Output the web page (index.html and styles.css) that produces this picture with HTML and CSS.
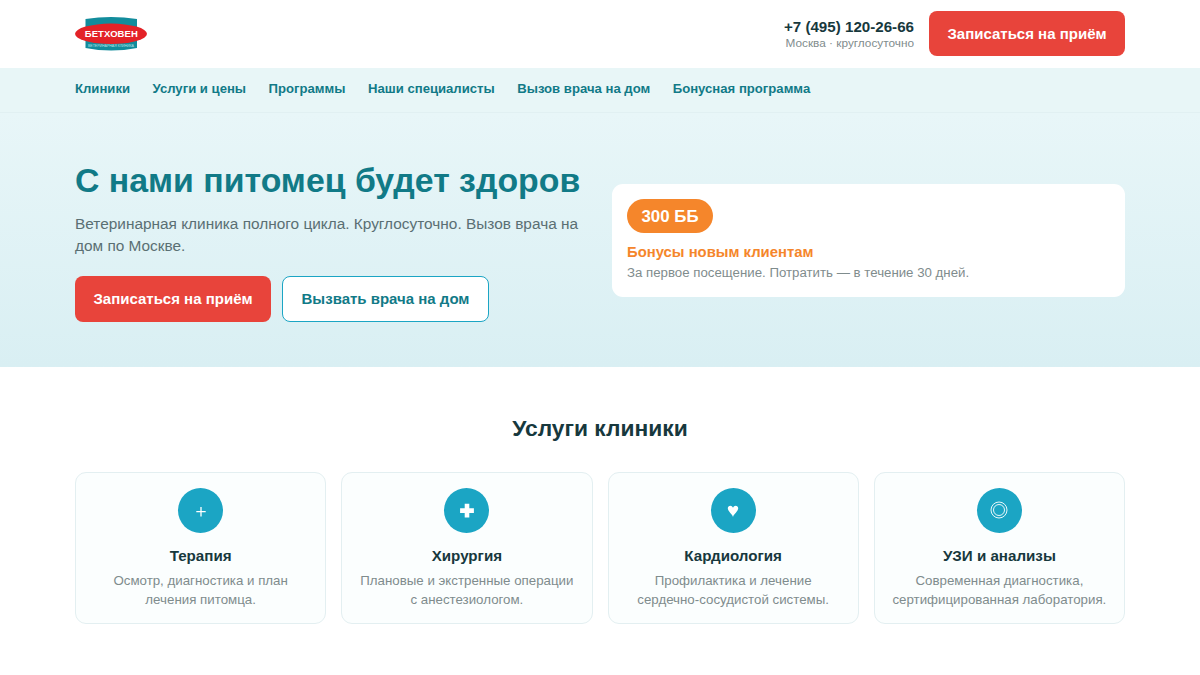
FILE: index.html
```html
<!DOCTYPE html>
<html lang="ru">
<head>
  <meta charset="UTF-8">
  <meta name="viewport" content="width=device-width, initial-scale=1.0">
  <title>Бетховен</title>
  <link rel="stylesheet" href="styles.css">
</head>
<body>
  <header class="header">
    <div class="container header-inner">
      <a href="#" class="logo">
        <svg width="72" height="36" viewBox="0 0 72 36">
          <path d="M10.5 3 Q36 -1 62 3 V32 Q36 37 10.5 32 Z" fill="#128c9c"/>
          <ellipse cx="36" cy="17.8" rx="36" ry="10.2" fill="#e32227"/>
          <text class="logo-name" x="36.3" y="21.2" text-anchor="middle" textLength="53">БЕТХОВЕН</text>
          <text class="logo-sub" x="36" y="30.8" text-anchor="middle" textLength="46">ВЕТЕРИНАРНАЯ КЛИНИКА</text>
        </svg>
      </a>
      <div class="header-right">
        <div class="phone">
          <a href="#" class="phone-number">+7 (495) 120-26-66</a>
          <span class="phone-note">Москва · круглосуточно</span>
        </div>
        <a href="#" class="btn btn-red">Записаться на приём</a>
      </div>
    </div>
  </header>

  <nav class="nav">
    <div class="container nav-inner">
      <a href="#">Клиники</a>
      <a href="#">Услуги и цены</a>
      <a href="#">Программы</a>
      <a href="#">Наши специалисты</a>
      <a href="#">Вызов врача на дом</a>
      <a href="#">Бонусная программа</a>
    </div>
  </nav>

  <section class="hero">
    <div class="container hero-inner">
      <div class="hero-text">
        <h1>С нами питомец будет здоров</h1>
        <p>Ветеринарная клиника полного цикла. Круглосуточно. Вызов врача на дом по Москве.</p>
        <div class="hero-buttons">
          <a href="#" class="btn btn-red">Записаться на приём</a>
          <a href="#" class="btn btn-outline">Вызвать врача на дом</a>
        </div>
      </div>
      <div class="bonus">
        <span class="bonus-badge">300 ББ</span>
        <h3>Бонусы новым клиентам</h3>
        <p>За первое посещение. Потратить — в течение 30 дней.</p>
      </div>
    </div>
  </section>

  <section class="services">
    <div class="container">
      <h2>Услуги клиники</h2>
      <div class="cards">
        <div class="card">
          <div class="card-icon">
            <svg width="18" height="18" viewBox="0 0 18 18"><path d="M9 6v9.4M4.3 10.7h9.4" stroke="#fff" stroke-width="1.3"/></svg>
          </div>
          <h3>Терапия</h3>
          <p>Осмотр, диагностика и план лечения питомца.</p>
        </div>
        <div class="card">
          <div class="card-icon">
            <svg width="18" height="18" viewBox="0 0 18 18"><path d="M6.7 2.7h4.6v4.6h4.6v4.6h-4.6v4.6H6.7v-4.6H2.1V7.3h4.6z" fill="#fff"/></svg>
          </div>
          <h3>Хирургия</h3>
          <p>Плановые и экстренные операции с&nbsp;анестезиологом.</p>
        </div>
        <div class="card">
          <div class="card-icon">
            <svg width="18" height="18" viewBox="0 0 18 18"><path d="M9 16C8.2 13.1 3.8 10.300 3.8 7.3c0-3.2 4.2-3.7 5.2-.5 1-3.2 5.2-2.7 5.2.5 0 3-4.4 5.8-5.2 8.7z" fill="#fff"/></svg>
          </div>
          <h3>Кардиология</h3>
          <p>Профилактика и лечение <span class="nowrap">сердечно-сосудистой</span> системы.</p>
        </div>
        <div class="card">
          <div class="card-icon">
            <svg width="18" height="18" viewBox="0 0 18 18" fill="none" stroke="#fff" stroke-width="0.9"><circle cx="9" cy="9" r="8"/><circle cx="9" cy="9" r="5.5"/></svg>
          </div>
          <h3>УЗИ и анализы</h3>
          <p>Современная диагностика, сертифицированная лаборатория.</p>
        </div>
      </div>
    </div>
  </section>
</body>
</html>
```
FILE: styles.css
```css
* {
  box-sizing: border-box;
  margin: 0;
  padding: 0;
}

body {
  font-family: "Liberation Sans", Arial, sans-serif;
  font-size: 15px;
  line-height: 1.5;
  color: #17383d;
  background: #fff;
}

a {
  text-decoration: none;
}

.container {
  width: 1050px;
  margin: 0 auto;
}

.header {
  padding: 11px 0 12px;
}

.header-inner {
  display: flex;
  justify-content: space-between;
  align-items: center;
}

.logo svg {
  display: block;
}

.logo-name {
  font-size: 9.5px;
  font-weight: bold;
  fill: #fff;
}

.logo-sub {
  font-size: 3.6px;
  fill: #b9e0e4;
}

.header-right {
  display: flex;
  align-items: center;
  gap: 15px;
}

.phone {
  display: flex;
  flex-direction: column;
  padding-top: 2px;
  text-align: right;
}

.phone-number {
  font-size: 15.15px;
  font-weight: bold;
  line-height: 17px;
  color: #17383d;
}

.phone-note {
  font-size: 11.8px;
  line-height: 16px;
  color: #7f8c8d;
}

.btn {
  display: inline-block;
  padding: 12px 0 10.5px;
  border-radius: 8px;
  font-weight: bold;
  text-align: center;
  white-space: nowrap;
}

.btn-red {
  width: 196px;
  background: #e8443b;
  color: #fff;
}

.btn-outline {
  width: 207px;
  border: 1px solid #1ba5c4;
  background: #fff;
  color: #117a87;
}

.nav {
  height: 45px;
  padding-top: 11px;
  background: #e8f6f7;
  border-bottom: 1px solid #e1f0f2;
}

.nav-inner {
  display: flex;
  gap: 22.5px;
}

.nav a {
  font-size: 13.13px;
  font-weight: bold;
  color: #117a87;
}

.hero {
  padding: 45px 0;
  background: linear-gradient(#e8f6f8, #d9eff3);
}

.hero-inner {
  display: grid;
  grid-template-columns: 1fr 1fr;
  gap: 24px;
  align-items: center;
}

.hero h1 {
  margin-bottom: 9.5px;
  font-size: 33.85px;
  line-height: 45px;
  color: #117a87;
  white-space: nowrap;
}

.hero-text p {
  margin-bottom: 18px;
  font-size: 15.4px;
  line-height: 22.5px;
  color: #5a6f73;
}

.hero-buttons {
  display: flex;
  gap: 11px;
}

.hero-buttons .btn {
  padding: 12px 0;
}

.hero-buttons .btn-outline {
  padding: 11px 0;
}

.bonus {
  margin-top: 1px;
  padding: 15px;
  border-radius: 11px;
  background: #fff;
}

.bonus-badge {
  display: block;
  width: 86px;
  margin-bottom: 8px;
  padding-top: 1px;
  border-radius: 17px;
  background: #f5862b;
  color: #fff;
  font-size: 16.875px;
  font-weight: bold;
  line-height: 33px;
  text-align: center;
}

.bonus h3 {
  font-size: 14.85px;
  line-height: 22px;
  color: #f5862b;
}

.bonus p {
  font-size: 13.25px;
  line-height: 19px;
  color: #7f8c8d;
}

.services {
  padding: 44px 0;
}

.services h2 {
  margin-bottom: 26.5px;
  font-size: 22.8px;
  line-height: 34px;
  text-align: center;
}

.cards {
  display: grid;
  grid-template-columns: repeat(4, 1fr);
  gap: 15px;
}

.card {
  padding: 15px 14px 14px;
  border: 1px solid #e3eff1;
  border-radius: 11px;
  background: #fbfefe;
  text-align: center;
}

.card-icon {
  display: flex;
  justify-content: center;
  align-items: center;
  width: 45px;
  height: 45px;
  margin: 0 auto 12px;
  border-radius: 50%;
  background: #1ba5c4;
}

.card h3 {
  margin-bottom: 4px;
  font-size: 15.15px;
  line-height: 22px;
}

.card p {
  font-size: 13.3px;
  line-height: 19px;
  color: #7f8c8d;
}

.nowrap {
  white-space: nowrap;
}
```
